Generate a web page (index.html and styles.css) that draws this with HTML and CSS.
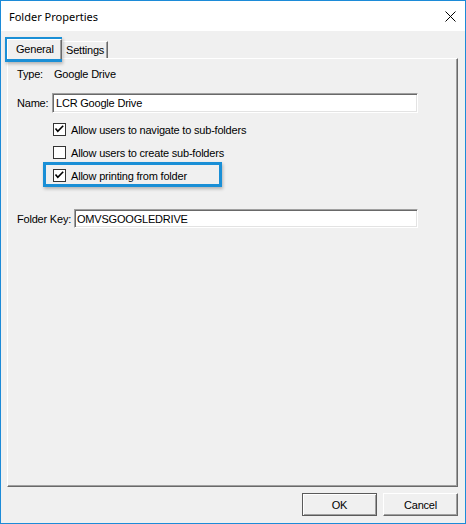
FILE: index.html
```html
<!DOCTYPE html>
<html>
<head>
<meta charset="utf-8">
<link rel="stylesheet" href="styles.css">
</head>
<body>
<div class="window">
  <div class="titlebar">
    <span class="title">Folder Properties</span>
    <svg class="close" width="11" height="11" viewBox="0 0 11 11"><path d="M0.5 0.5 L10.5 10.5 M10.5 0.5 L0.5 10.5" stroke="#000" stroke-width="1" fill="none"/></svg>
  </div>
  <div class="body">
    <div class="tabs">
      <div class="tab selected">General</div>
      <div class="tab">Settings</div>
    </div>
    <div class="panel">
      <div class="row type-row">
        <span class="label type-label">Type:</span>
        <span>Google Drive</span>
      </div>
      <div class="row name-row">
        <span class="label name-label">Name:</span>
        <div class="textbox name-box">LCR Google Drive</div>
      </div>
      <div class="checks">
        <div class="check">
          <svg class="box" width="13" height="13" viewBox="0 0 13 13"><rect x="0.5" y="0.5" width="12" height="12" fill="#fff" stroke="#333"/><polyline points="2.5,5.5 4.8,8.3 10.2,2.8" fill="none" stroke="#000" stroke-width="1.6"/></svg>
          <span>Allow users to navigate to sub-folders</span>
        </div>
        <div class="check">
          <svg class="box" width="13" height="13" viewBox="0 0 13 13"><rect x="0.5" y="0.5" width="12" height="12" fill="#fff" stroke="#333"/></svg>
          <span>Allow users to create sub-folders</span>
        </div>
        <div class="check">
          <svg class="box" width="13" height="13" viewBox="0 0 13 13"><rect x="0.5" y="0.5" width="12" height="12" fill="#fff" stroke="#333"/><polyline points="2.5,5.5 4.8,8.3 10.2,2.8" fill="none" stroke="#000" stroke-width="1.6"/></svg>
          <span>Allow printing from folder</span>
        </div>
      </div>
      <div class="row key-row">
        <span class="label key-label">Folder Key:</span>
        <div class="textbox key-box">OMVSGOOGLEDRIVE</div>
      </div>
    </div>
    <div class="buttons">
      <div class="btn default">OK</div>
      <div class="btn">Cancel</div>
    </div>
  </div>
  <div class="hl hl-tab"></div>
  <div class="hl hl-check"></div>
</div>
</body>
</html>
```

FILE: styles.css
```css
html, body {
  margin: 0;
  padding: 0;
  background: #fff;
}
.window {
  position: relative;
  width: 466px;
  height: 524px;
  box-sizing: border-box;
  border: 1px solid #1c8bd8;
  display: flex;
  flex-direction: column;
  background: #f0f0f0;
  font-family: "Liberation Sans", Arial, sans-serif;
  font-size: 11px;
  letter-spacing: -0.2px;
  color: #000;
}
.titlebar {
  height: 30px;
  flex: none;
  background: #fff;
  display: flex;
  align-items: center;
  justify-content: space-between;
  padding: 0 9px 0 8px;
}
.title {
  font-family: "Noto Sans", sans-serif;
  font-size: 11px;
  letter-spacing: 0;
}
.close {
  display: block;
}
.body {
  flex: 1;
  display: flex;
  flex-direction: column;
  padding: 8px 7px 7px 6px;
  min-height: 0;
}
.tabs {
  height: 19px;
  flex: none;
  display: flex;
  align-items: flex-end;
}
.tab {
  position: relative;
  box-sizing: border-box;
  height: 17px;
  padding: 2px 3px 0 3px;
  border-top: 1px solid #fff;
  border-left: 1px solid #fff;
  border-right: 1px solid #696969;
  box-shadow: inset -1px 0 #a0a0a0;
  line-height: 13px;
}
.tab.selected {
  height: 20px;
  width: 55px;
  margin-bottom: -1px;
  padding: 3px 0 0 8px;
  background: #f0f0f0;
  z-index: 1;
}
.panel {
  flex: 1;
  box-sizing: border-box;
  border-top: 1px solid #fff;
  border-left: 1px solid #fff;
  border-right: 1px solid #696969;
  border-bottom: 1px solid #696969;
  box-shadow: inset -1px -1px #a0a0a0;
  padding: 8px 0 0 9px;
}
.row {
  display: flex;
  align-items: center;
}
.label {
  flex: none;
}
.type-row {
  height: 14px;
}
.type-label {
  width: 37px;
}
.name-row {
  margin-top: 12px;
}
.name-label {
  width: 35px;
}
.textbox {
  box-sizing: border-box;
  background: #fff;
  border: 1px solid;
  border-color: #a0a0a0 #fff #fff #a0a0a0;
  box-shadow: inset 1px 1px #696969, inset -1px -1px #e3e3e3;
  padding: 0 0 0 3px;
  display: flex;
  align-items: center;
}
.name-box {
  width: 366px;
  height: 20px;
}
.checks {
  margin-top: 10px;
  margin-left: 36px;
  display: flex;
  flex-direction: column;
  gap: 10px;
}
.check {
  display: flex;
  align-items: center;
  height: 13px;
  gap: 5px;
}
.box {
  display: block;
  flex: none;
}
.key-row {
  margin-top: 27px;
}
.key-label {
  width: 57px;
}
.key-box {
  width: 344px;
  height: 19px;
  padding-left: 2px;
}
.buttons {
  flex: none;
  margin-top: 6px;
  display: flex;
  justify-content: flex-end;
  gap: 6px;
}
.btn {
  box-sizing: border-box;
  width: 75px;
  height: 23px;
  display: flex;
  align-items: center;
  justify-content: center;
  border: 1px solid;
  border-color: #fff #696969 #696969 #fff;
  box-shadow: inset -1px -1px #a0a0a0;
}
.btn.default {
  border: 1px solid #5a5a5a;
  box-shadow: inset 1px 1px #fff, inset -1px -1px #a0a0a0;
}
.hl {
  position: absolute;
  box-sizing: border-box;
  border: 3px solid #1a8fd6;
  box-shadow: 1px 2px 3px rgba(0, 0, 0, 0.25);
}
.hl-tab {
  left: 4px;
  top: 36px;
  width: 57px;
  height: 25px;
}
.hl-check {
  left: 42px;
  top: 161px;
  width: 179px;
  height: 25px;
}
```
